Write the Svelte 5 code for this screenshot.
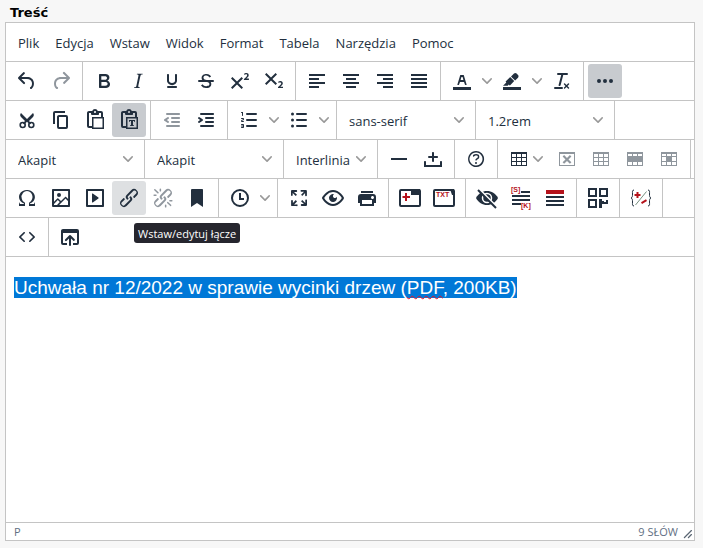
<script>
  const menus = ['Plik', 'Edycja', 'Wstaw', 'Widok', 'Format', 'Tabela', 'Narzędzia', 'Pomoc'];

  const chain = 'M6.2 12.3a1 1 0 011.4 1.4l-2.1 2a2 2 0 102.7 2.8l4.8-4.8a1 1 0 000-1.4 1 1 0 111.4-1.3 2.9 2.9 0 010 4L9.6 20a3.9 3.9 0 01-5.5-5.5l2-2zm11.6-.6a1 1 0 01-1.4-1.4l2-2a2 2 0 10-2.6-2.8L11 10.3a1 1 0 000 1.4A1 1 0 119.6 13a2.9 2.9 0 010-4L14.4 4a3.9 3.9 0 015.5 5.5l-2 2z';
  const board = 'M18 9V5h-2v1c0 .6-.4 1-1 1H9a1 1 0 01-1-1V5H6v13h3V9h9zM9 20H6a2 2 0 01-2-2V5c0-1.1.9-2 2-2h3.2A3 3 0 0112 1a3 3 0 012.8 2H18a2 2 0 012 2v4h1v12H9v-1zm1.5-9.5v9h9v-9h-9zM12 3a1 1 0 00-1 1c0 .5.4 1 1 1s1-.5 1-1-.4-1-1-1z';
  const indentLines = 'M7 5h12c.6 0 1 .4 1 1s-.4 1-1 1H7a1 1 0 110-2zm5 4h7c.6 0 1 .4 1 1s-.4 1-1 1h-7a1 1 0 010-2zm0 4h7c.6 0 1 .4 1 1s-.4 1-1 1h-7a1 1 0 010-2zm-5 4h12a1 1 0 010 2H7a1 1 0 010-2z';
  const listLines = 'M10 17h9a1 1 0 010 2h-9a1 1 0 010-2zm0-6h9a1 1 0 010 2h-9a1 1 0 010-2zm0-6h9a1 1 0 010 2h-9a1 1 0 010-2z';

  const paths = {
    undo: 'M6.4 8H12c3.7 0 6.2 2 6.8 5.1.6 2.7-.4 5.6-2.3 6.8a1 1 0 01-1-1.8c1.1-.6 1.8-2.7 1.4-4.6-.5-2.1-2.1-3.5-4.9-3.5H6.4l3.3 3.3a1 1 0 11-1.4 1.4l-5-5a1 1 0 010-1.4l5-5a1 1 0 011.4 1.4L6.4 8z',
    redo: 'M17.6 10H12c-2.8 0-4.4 1.4-4.9 3.5-.4 2 .3 4 1.4 4.6a1 1 0 11-1 1.8c-2-1.2-2.9-4.1-2.3-6.8.6-3 3-5.1 6.8-5.1h5.6l-3.3-3.3a1 1 0 111.4-1.4l5 5a1 1 0 010 1.4l-5 5a1 1 0 01-1.4-1.4l3.3-3.3z',
    bold: 'M7.8 19c-.3 0-.5 0-.6-.2l-.2-.5V5.7c0-.2 0-.4.2-.5l.6-.2h5c1.5 0 2.7.3 3.5 1 .7.6 1.1 1.4 1.1 2.5a3 3 0 01-.6 1.9c-.4.6-1 1-1.6 1.2.4.1.9.3 1.3.6s.8.7 1 1.2c.4.4.5 1 .5 1.6 0 1.3-.4 2.3-1.3 3-.8.7-2.1 1-3.8 1H7.8zm5-8.3c.6 0 1.2-.1 1.6-.5.4-.3.6-.7.6-1.3 0-1.1-.8-1.7-2.3-1.7H9.3v3.5h3.4zm.5 6c.7 0 1.3-.1 1.7-.4.4-.4.6-.9.6-1.5s-.2-1-.7-1.4c-.4-.3-1-.4-2-.4H9.4v3.8h4z',
    italic: 'M16.7 4.7l-.1.9h-.3c-.6 0-1 0-1.4.3-.3.3-.4.6-.5 1.1l-2.1 9.8v.6c0 .5.4.8 1.4.8h.2l-.2.8H8l.2-.8h.2c1.1 0 1.8-.5 2-1.5l2-9.8.1-.5c0-.6-.4-.8-1.4-.8h-.3l.2-.9h5.8z',
    underline: 'M16 5c.6 0 1 .4 1 1v5.5a4 4 0 01-.4 1.8l-1 1.4a5.3 5.3 0 01-5.5 1 5 5 0 01-1.6-1c-.5-.4-.8-.9-1.1-1.4a4 4 0 01-.4-1.8V6c0-.6.4-1 1-1s1 .4 1 1v5.5c0 .3 0 .6.2 1l.6.7a3.3 3.3 0 002.2.8 3.4 3.4 0 002.2-.8c.3-.2.4-.5.6-.8l.2-.9V6c0-.6.4-1 1-1zM8 17h8c.6 0 1 .4 1 1s-.4 1-1 1H8a1 1 0 010-2z',
    superscript: 'M15 9.4L10.4 14l4.6 4.6-1.4 1.4L9 15.4 4.4 20 3 18.6 7.6 14 3 9.4 4.4 8 9 12.6 13.6 8 15 9.4zm5.9 1.6h-5v-1l1-.8 1.7-1.6c.3-.5.5-.9.5-1.3 0-.3 0-.5-.2-.7-.2-.2-.5-.3-.9-.3l-.8.2-.7.4-.4-1.2c.2-.2.5-.4 1-.5.3-.2.8-.2 1.2-.2.8 0 1.4.2 1.8.6.4.4.6 1 .6 1.6 0 .5-.2 1-.5 1.5l-1.3 1.4-.6.5h2.6V11z',
    subscript: 'M10.4 10l4.6 4.6-1.4 1.4L9 11.4 4.4 16 3 14.6 7.6 10 3 5.4 4.4 4 9 8.6 13.6 4 15 5.4 10.4 10zM21 19h-5v-1l1-.8 1.7-1.6c.3-.4.5-.8.5-1.2 0-.3 0-.6-.2-.7-.2-.2-.5-.3-.9-.3a2 2 0 00-.8.2l-.7.3-.4-1.1 1-.6 1.2-.2c.8 0 1.4.3 1.8.7.4.4.6.9.6 1.5s-.2 1.1-.5 1.6a8 8 0 01-1.3 1.3l-.6.6h2.6V19z',
    alignLeft: 'M4 5h16v2H4zM4 9h10v2H4zM4 13h16v2H4zM4 17h10v2H4z',
    alignCenter: 'M4 5h16v2H4zM7 9h10v2H7zM4 13h16v2H4zM7 17h10v2H7z',
    alignRight: 'M4 5h16v2H4zM10 9h10v2H10zM4 13h16v2H4zM10 17h10v2H10z',
    justify: 'M4 5h16v2H4zM4 9h16v2H4zM4 13h16v2H4zM4 17h16v2H4z',
    textColor: 'M3 18h18v3H3zM8.7 16h-.8a.5.5 0 01-.5-.6l2.7-9c.1-.3.3-.4.5-.4h2.8c.2 0 .4.1.5.4l2.7 9a.5.5 0 01-.5.6h-.8a.5.5 0 01-.4-.4l-.7-2.2c0-.3-.3-.4-.5-.4h-3.4c-.2 0-.4.1-.5.4l-.7 2.2c0 .3-.2.4-.4.4zm2.6-7.6l-.6 2a.5.5 0 00.5.6h1.6a.5.5 0 00.5-.6l-.6-2c0-.3-.3-.4-.5-.4h-.4c-.2 0-.4.1-.5.4z',
    highlight: 'M3 18h18v3H3zM7.7 16.7H3l3.3-3.3-.7-.8L10.2 8l4 4.1-4 4.2c-.2.2-.6.2-.8 0l-.6-.7-1.1 1.1zm5-7.5L11 7.4l3-2.9a2 2 0 012.6 0L18 6c.7.7.7 2 0 2.7l-2.9 2.9-1.8-1.8-.5-.6',
    clear: 'M13.2 6a1 1 0 010 .2l-2.6 10a1 1 0 01-1 .8h-.2a.8.8 0 01-.8-1l2.6-10H8a1 1 0 110-2h9a1 1 0 010 2h-3.8zM5 18h7a1 1 0 010 2H5a1 1 0 010-2zm13 1.5L16.5 18 15 19.5a.7.7 0 01-1-1l1.5-1.5-1.5-1.5a.7.7 0 011-1l1.5 1.5 1.5-1.5a.7.7 0 011 1L17.5 17l1.5 1.5a.7.7 0 01-1 1z',
    more: 'M6 10a2 2 0 100 4 2 2 0 000-4zm12 0a2 2 0 100 4 2 2 0 000-4zm-6 0a2 2 0 100 4 2 2 0 000-4z',
    copy: 'M16 3H6a2 2 0 00-2 2v11h2V5h10V3zm1 4a2 2 0 012 2v10a2 2 0 01-2 2h-7a2 2 0 01-2-2V9c0-1.2.9-2 2-2h7zm0 12V9h-7v10h7z',
    paste: board,
    pasteText: board + 'M12 12h6v2h-.5l-.5-1h-1v4h.8v1h-3.6v-1h.8v-4h-1l-.5 1H12v-2z',
    outdent: indentLines + 'm1.6-3.8a1 1 0 01-1.2 1.6l-3-2a1 1 0 010-1.6l3-2a1 1 0 011.2 1.6L6.8 12l1.8 1.2z',
    indent: indentLines + 'm-2.6-3.8L6.2 12l-1.8-1.2a1 1 0 011.2-1.6l3 2a1 1 0 010 1.6l-3 2a1 1 0 11-1.2-1.6z',
    numbers: listLines + 'M6 4v3.5c0 .3-.2.5-.5.5a.5.5 0 01-.5-.5V5h-.5a.5.5 0 010-1H6zm-1 8.8l.2.2h1.3c.3 0 .5.2.5.5s-.2.5-.5.5H4.9a1 1 0 01-.9-1V13c0-.4.3-.8.6-1l1.2-.4.2-.3a.2.2 0 00-.2-.2H4.5a.5.5 0 01-.5-.5c0-.3.2-.5.5-.5h1.6c.5 0 .9.4.9 1v.1c0 .4-.3.8-.6 1l-1.2.4-.2.3zM7 17v2c0 .6-.4 1-1 1H4.5a.5.5 0 010-1h1.2c.2 0 .3-.1.3-.3 0-.2-.1-.3-.3-.3H4.4a.4.4 0 110-.8h1.3c.2 0 .3-.1.3-.3 0-.2-.1-.3-.3-.3H4.5a.5.5 0 110-1H6c.6 0 1 .4 1 1z',
    bullets: listLines + 'M5.5 4.500a1.500 1.500 0 100 3 1.500 1.500 0 000-3zm0 6a1.500 1.500 0 100 3 1.500 1.500 0 000-3zm0 6a1.500 1.500 0 100 3 1.500 1.500 0 000-3z',
    rule: 'M4 11h16v2H4z',
    space: 'M11 11H8a1 1 0 110-2h3V6c0-.6.4-1 1-1s1 .4 1 1v3h3c.6 0 1 .4 1 1s-.4 1-1 1h-3v3c0 .6-.4 1-1 1a1 1 0 01-1-1v-3zm10 4v5H3v-5c0-.6.4-1 1-1s1 .4 1 1v3h14v-3c0-.6.4-1 1-1s1 .4 1 1z',
    help: 'M12 5.500a6.500 6.500 0 00-6 9 6.300 6.300 0 001.400 2l1 1a6.300 6.300 0 003.600 1 6.500 6.500 0 006-9 6.300 6.300 0 00-1.400-2l-1-1a6.300 6.300 0 00-3.600-1zM12 4a7.800 7.800 0 015.700 2.300A8 8 0 1112 4zM9.600 9.700a.7.7 0 01-.7-.8c0-1.100 1.500-1.800 3.200-1.800 1.800 0 3.200.8 3.200 2.400 0 1.400-.4 2.100-1.500 2.800-.2 0-.3.1-.3.2a2 2 0 00-.8.8.8.8 0 01-1.400-.6c.3-.7.8-1 1.300-1.500l.4-.2c.7-.4.8-.6.8-1.500 0-.5-.6-.9-1.700-.9-.5 0-1 .1-1.400.3-.2 0-.3.1-.3.2 0 .2-.4.6-.8.6zM12 15a1 1 0 100 2 1 1 0 000-2z',
    table: 'M4 5h16v14H4zM5 7v3h4V7zm5 0v3h4V7zm5 0v3h4V7zM5 11v3h4v-3zm5 0v3h4v-3zm5 0v3h4v-3zM5 15v3h4v-3zm5 0v3h4v-3zm5 0v3h4v-3z',
    tableDelete: 'M4 5h16v14H4zM5 7v11h14V7zM9.100 8L12 10.900 14.900 8l1.500 1.500-2.900 2.900 2.900 2.900-1.500 1.500L12 13.900l-2.900 2.900-1.500-1.500 2.900-2.900-2.900-2.900z',
    tableRow: 'M4 5h16v14H4zM5 7v2h4V7zm5 0v2h4V7zm5 0v2h4V7zM5 15v3h4v-3zm5 0v3h4v-3zm5 0v3h4v-3z',
    tableCell: 'M4 5h16v14H4zM5 7v2h4V7zm5 0v2h4V7zm5 0v2h4V7zM5 10v4h4v-4zm10 0v4h4v-4zM5 15v3h4v-3zm5 0v3h4v-3zm5 0v3h4v-3z',
    omega: 'M15 18h4l1-2v4h-6v-3.3l1.4-1a6 6 0 001.8-2.9 6.3 6.3 0 00-.1-4.1 5.8 5.8 0 00-3-3.2c-.6-.3-1.3-.5-2.1-.5a5.1 5.1 0 00-3.9 1.8 6.3 6.3 0 00-1.3 6 6.2 6.2 0 001.8 3l1.4.9V20H4v-4l1 2h4v-.5l-2-1L5.4 15A6.5 6.5 0 014 11c0-1 .2-1.9.6-2.7A7 7 0 017.8 5C9.1 4.3 10.5 4 12 4a8.8 8.8 0 013.7.7c1.1.5 2 1.3 2.8 2.2a6.4 6.4 0 011.4 4.1c0 1.4-.5 2.8-1.3 4l-1.7 1.5-2 1v.5z',
    image: 'M5 15.7l3.3-3.2c.3-.3.7-.3 1 0L12 15l4.1-4c.3-.4.8-.4 1 0l2 1.9V5H5v10.7zM5 18V19h3l2.8-2.9-2-2L5 17.9zm14-3l-2.5-2.4-6.4 6.5H19v-4zM4 3h16c.6 0 1 .4 1 1v16c0 .6-.4 1-1 1H4a1 1 0 01-1-1V4c0-.6.4-1 1-1zm6 8a2 2 0 100-4 2 2 0 000 4z',
    media: 'M4 3h16c.6 0 1 .4 1 1v16c0 .6-.4 1-1 1H4a1 1 0 01-1-1V4c0-.6.4-1 1-1zm1 2v14h14V5H5zm4.8 2.6l5.6 4a.5.5 0 010 .8l-5.6 4A.5.5 0 019 16V8a.5.5 0 01.8-.4z',
    link: chain,
    unlink: chain + 'M7.6 6.3a.8.8 0 01-1 1.1L3.3 4.2a.7.7 0 111-1l3.2 3.1zM5.1 8.6a.8.8 0 010 1.5H3a.8.8 0 010-1.5H5zm5-3.5a.8.8 0 01-1.5 0V3a.8.8 0 011.5 0V5zm6 11.8a.8.8 0 011-1l3.2 3.2a.8.8 0 01-1 1L16 17zm-2.2 2a.8.8 0 011.5 0V21a.8.8 0 01-1.5 0V19zm5-3.5a.7.7 0 110-1.5H21a.8.8 0 010 1.5H19z',
    bookmark: 'M6 4v17l6-4 6 4V4c0-.6-.4-1-1-1H7a1 1 0 00-1 1z',
    clock: 'M12 3a9 9 0 100 18 9 9 0 000-18zm0 2a7 7 0 110 14 7 7 0 010-14zM11 7h2v5h3v2h-5z',
    fullscreen: 'M15.3 10l-1.2-1.3 2.9-3h-2.3a.9.9 0 110-1.7H19c.5 0 .9.4.9.9v4.4a.9.9 0 11-1.8 0V7l-2.9 3zm0 4l3 3v-2.3a.9.9 0 111.7 0V19c0 .5-.4.9-.9.9h-4.4a.9.9 0 110-1.8H17l-3-2.9 1.3-1.2zM10 15.4l-2.9 3h2.3a.9.9 0 110 1.7H5a.9.9 0 01-.9-.9v-4.4a.9.9 0 111.8 0V17l2.9-3 1.2 1.4zM8.7 10L5.7 7v2.3a.9.9 0 01-1.7 0V5c0-.5.4-.9.9-.9h4.4a.9.9 0 010 1.8H7l3 2.9-1.3 1.2z',
    preview: 'M3.5 12.5c.5.8 1.1 1.6 1.8 2.3 2 2 4.2 3.2 6.7 3.2s4.7-1.2 6.7-3.2a16.2 16.2 0 002.1-2.8 15.7 15.7 0 00-2.1-2.8c-2-2-4.2-3.2-6.7-3.2a9.3 9.3 0 00-6.7 3.2A16.2 16.2 0 003.2 12c0 .2.2.3.3.5zm-2.4-1l.7-1.2L4 7.8C6.2 5.4 8.9 4 12 4c3 0 5.8 1.4 8.1 3.8a18.2 18.2 0 012.8 3.7v1l-.7 1.2a18.2 18.2 0 01-2.2 2.5c-2.2 2.4-5 3.8-8 3.8s-5.8-1.4-8.1-3.8a18.2 18.2 0 01-2.8-3.7 1 1 0 010-1zm12-3.3a2 2 0 102.7 2.6 4 4 0 11-2.6-2.6z',
    print: 'M18 8H6a3 3 0 00-3 3v6h2v3h14v-3h2v-6a3 3 0 00-3-3zm-1 10H7v-4h10v4zm.5-5c-.8 0-1.5-.7-1.5-1.5s.7-1.5 1.5-1.5 1.5.7 1.5 1.5-.7 1.5-1.5 1.5zm.5-8H6v2h12V5z',
    qr: 'M2 2h9v9H2zM4 4v5h5V4zM13 2h9v9h-9zM15 4v5h5V4zM2 13h9v9H2zM4 15v5h5v-5zM13 13h3v2h2v1h2v-2h2v4h-6v4h-3z',
    code: 'M9.8 15.7c.3.3.3.8 0 1-.3.4-.9.4-1.2 0l-4.4-4.1a.8.8 0 010-1.2l4.4-4.2c.3-.3.9-.3 1.2 0 .3.3.3.8 0 1.1L6 12l3.8 3.7zM14.2 15.7c-.3.3-.3.8 0 1 .4.4.9.4 1.2 0l4.4-4.1c.3-.3.3-.8 0-1.2l-4.4-4.2a.8.8 0 00-1.2 0c-.3.3-.3.8 0 1.1L18 12l-3.8 3.7z',
    upload: 'M19 4a2 2 0 012 2v12a2 2 0 01-2 2h-4v-2h4V8H5v10h4v2H5a2 2 0 01-2-2V6c0-1.1.9-2 2-2h14zm-8 9.4l-2.3 2.3a1 1 0 11-1.4-1.4l4-4a1 1 0 011.4 0l4 4a1 1 0 01-1.4 1.4L13 13.4V20a1 1 0 01-2 0v-6.6z'
  };

  const b = (icon, label, state = '') => ({ kind: 'button', icon, label, state });
  const split = (icon, label) => ({ kind: 'split', icon, label });
  const pick = (value, label, size = 'wide') => ({ kind: 'select', value, label, size });

  const rows = [
    [
      [b('undo', 'Cofnij'), b('redo', 'Ponów', 'off')],
      [b('bold', 'Pogrubienie'), b('italic', 'Kursywa'), b('underline', 'Podkreślenie'), b('strike', 'Przekreślenie'), b('superscript', 'Indeks górny'), b('subscript', 'Indeks dolny')],
      [b('alignLeft', 'Wyrównaj do lewej'), b('alignCenter', 'Wyśrodkuj'), b('alignRight', 'Wyrównaj do prawej'), b('justify', 'Wyjustuj')],
      [split('textColor', 'Kolor tekstu'), split('highlight', 'Kolor tła'), b('clear', 'Wyczyść formatowanie')],
      [b('more', 'Więcej', 'on')]
    ],
    [
      [b('cut', 'Wytnij'), b('copy', 'Kopiuj'), b('paste', 'Wklej'), b('pasteText', 'Wklej jako tekst', 'on')],
      [b('outdent', 'Zmniejsz wcięcie', 'off'), b('indent', 'Zwiększ wcięcie')],
      [split('numbers', 'Lista numerowana'), split('bullets', 'Lista wypunktowana')],
      [pick('sans-serif', 'Krój pisma')],
      [pick('1.2rem', 'Rozmiar pisma')],
      []
    ],
    [
      [pick('Akapit', 'Format bloku')],
      [pick('Akapit', 'Styl')],
      [pick('Interlinia', 'Interlinia', 'narrow')],
      [b('rule', 'Pozioma linia'), b('space', 'Twarda spacja')],
      [b('help', 'Pomoc')],
      [{ kind: 'menu', icon: 'table', label: 'Tabela' }, b('tableDelete', 'Usuń tabelę', 'off'), b('table', 'Właściwości tabeli', 'off'), b('tableRow', 'Właściwości wiersza', 'off'), b('tableCell', 'Właściwości komórki', 'off')],
      []
    ],
    [
      [b('omega', 'Znak specjalny'), b('image', 'Wstaw obraz'), b('media', 'Wstaw media'), { ...b('link', 'Wstaw/edytuj łącze', 'hover'), tip: true }, b('unlink', 'Usuń łącze', 'off'), b('bookmark', 'Zakładka')],
      [split('clock', 'Wstaw datę i czas')],
      [b('fullscreen', 'Pełny ekran'), b('preview', 'Podgląd'), b('print', 'Drukuj')],
      [b('addFrame', 'Dodaj ramkę'), b('txtFrame', 'Ramka tekstowa')],
      [b('hidden', 'Niewidoczne znaki'), b('sections', 'Sekcje'), b('redLines', 'Wyróżnij wiersz')],
      [b('qr', 'Kod QR')],
      [b('variables', 'Zmienne')],
      []
    ],
    [[b('code', 'Kod źródłowy')], [b('upload', 'Wczytaj plik')]]
  ];
</script>

{#snippet glyph(name)}
  <svg class="icon" viewBox="0 0 24 24" width="24" height="24" aria-hidden="true">
    {#if name === 'cut'}
      <g fill="none" stroke="currentColor" stroke-width="1.6">
        <circle cx="7.7" cy="17" r="2.5" />
        <circle cx="16.3" cy="17" r="2.5" />
      </g>
      <path d="M6 5l6 6 6-6c1.100 1.300 1.100 2.900 0 4l-4 4 2.200 2.200-1.400 1.400L12 13.800l-2.800 2.800-1.400-1.400L10 13 6 9c-1.100-1.100-1.100-2.700 0-4z" />
    {:else if name === 'strike'}
      <path d="M15.600 8.500c-.5-.7-1-1.100-1.300-1.300-.6-.4-1.300-.6-2-.6-2.700 0-2.800 1.700-2.800 2.100 0 1.600 1.800 2 3.200 2.300 4.400.9 4.600 2.800 4.600 3.900 0 1.400-.7 4.100-5 4.100A6.200 6.200 0 017 16.400l1.500-1.100c.4.6 1.600 2 3.700 2 1.600 0 2.500-.4 3-1.200.4-.8.3-2-.8-2.600-.7-.4-1.600-.7-2.900-1-1-.2-3.900-.8-3.900-3.600C7.600 6 10.300 5 12.400 5c2.900 0 4.200 1.600 4.700 2.400l-1.500 1.100z" />
      <path d="M5 11h14a1 1 0 010 2H5a1 1 0 010-2z" />
    {:else if name === 'addFrame' || name === 'txtFrame'}
      <rect x="2" y="4" width="20" height="16" rx="1" fill="#fff" stroke="currentColor" stroke-width="2" />
      {#if name === 'addFrame'}
        <path d="M13 3h9v6h-9z" />
        <path class="red" d="M7 7h2v3h3v2H9v3H7v-3H4.500v-2H7z" />
      {:else}
        <path d="M18 3h4v6h-2z" />
        <text class="red tiny" x="4" y="11">TXT</text>
      {/if}
    {:else if name === 'hidden'}
      <path d="M1 12c2.500-4.800 6.500-7 11-7s8.500 2.200 11 7c-2.500 4.800-6.500 7-11 7s-8.500-2.200-11-7z" />
      <circle cx="12" cy="12" r="4.500" fill="none" stroke="#fff" stroke-width="1.500" />
      <path d="M2.500 1.500l19 19" stroke="#fff" stroke-width="2" />
      <path d="M3 4l18 18" stroke="currentColor" stroke-width="2" />
    {:else if name === 'sections'}
      <path d="M12 5h9v2h-9zM3 9h18v2H3zM3 13h18v2H3zM3 17h9v2H3z" />
      <text class="red tiny" x="2" y="6">[S]</text>
      <text class="red tiny" x="12" y="22">[K]</text>
    {:else if name === 'redLines'}
      <path class="red" d="M3 4h18v4H3z" />
      <path d="M3 10h18v2H3zM3 14h18v2H3zM3 18h18v2H3z" />
    {:else if name === 'variables'}
      <g fill="none" stroke="currentColor" stroke-width="1">
        <path d="M5 4C3 4 3.500 6 3.500 8S3.500 11.500 2 12c1.500.5 1.500 2 1.500 4S3 20 5 20M19 4c2 0 1.500 2 1.500 4s0 3.500 1.500 4c-1.500.5-1.500 2-1.500 4s.5 4-1.500 4" />
        <path d="M6.500 19L17.500 5.500" stroke="#789080" />
      </g>
      <path class="red" d="M7.500 6h2v2h2v2h-2v2h-2v-2h-2V8h2zM12 16.200l5-3 1 1.800-5 3z" />
    {:else}
      <path fill-rule="evenodd" d={paths[name]} />
    {/if}
  </svg>
{/snippet}

{#snippet chevron()}
  <svg class="chevron" viewBox="0 0 10 10" width="10" height="10" aria-hidden="true">
    <path d="M8.700 2.200c.3-.3.800-.3 1 0 .4.4.4.9 0 1.200L5.700 7.800c-.3.3-.9.3-1.200 0L.2 3.400a.8.8 0 010-1.200c.3-.3.8-.3 1.100 0L5 6l3.700-3.800z" />
  </svg>
{/snippet}

<main class="field">
  <div class="label" id="content-label">Treść</div>
  <div class="editor">
    <nav class="menubar" aria-label="Menu">
      {#each menus as item}
        <button type="button">{item}</button>
      {/each}
    </nav>

    {#each rows as row}
      <div class="toolbar" role="toolbar">
        {#each row as group}
          <div class="group">
            {#each group as item}
              {#if item.kind === 'button'}
                <div class="slot">
                  <button type="button" class="tool {item.state}" aria-label={item.label} disabled={item.state === 'off'}>
                    {@render glyph(item.icon)}
                  </button>
                  {#if item.tip}
                    <div class="tooltip" role="tooltip">{item.label}</div>
                  {/if}
                </div>
              {:else if item.kind === 'split'}
                <button type="button" class="tool" aria-label={item.label}>{@render glyph(item.icon)}</button>
                <button type="button" class="arrow" aria-label="{item.label}: opcje">{@render chevron()}</button>
              {:else if item.kind === 'menu'}
                <button type="button" class="tool with-menu" aria-label={item.label}>
                  {@render glyph(item.icon)}{@render chevron()}
                </button>
              {:else}
                <div class="pick {item.size}">
                  <select aria-label={item.label}>
                    <option>{item.value}</option>
                  </select>
                  {@render chevron()}
                </div>
              {/if}
            {/each}
          </div>
        {/each}
      </div>
    {/each}

    <div class="content" contenteditable="true" role="textbox" tabindex="0" spellcheck="false" aria-labelledby="content-label">
      <p><span class="selected">Uchwała nr 12/2022 w sprawie wycinki drzew (<span class="misspelt">PDF</span>, 200KB)</span></p>
    </div>

    <footer class="status">
      <span>P</span>
      <span class="count">9 SŁÓW</span>
      <svg class="grip" viewBox="0 0 10 10" width="10" height="10" aria-hidden="true">
        <path d="M8.100 1.100A.5.5 0 118.900 2l-7 7A.5.5 0 111 8l7-7zM8.100 5.100A.5.5 0 118.900 6l-3 3A.5.5 0 115 8l3-3z" />
      </svg>
    </footer>
  </div>
</main>

<style>
  :global(body) {
    margin: 0;
    background: #f7f7f7;
  }

  .field {
    padding: 4px 8px 7px 5px;
    color: #222f3e;
    font: 13px/20px 'Open Sans', 'Noto Sans', sans-serif;
  }

  .label {
    padding-left: 5px;
    color: #000;
    font: bold 13px/18px 'DejaVu Sans', sans-serif;
  }

  .editor {
    border: 1px solid #c4c4c4;
    background: #fff;
  }

  button,
  select {
    margin: 0;
    border: 0;
    background: none;
    color: inherit;
    font: inherit;
  }

  .menubar {
    display: flex;
    padding: 2px 4px;
  }

  .menubar button {
    height: 34px;
    padding: 2px 8px 0;
  }

  .toolbar {
    display: flex;
    min-height: 38px;
    border-top: 1px solid #c4c4c4;
  }

  .group {
    display: flex;
    align-items: flex-start;
    padding: 2px 4px;
    border-right: 1px solid #c4c4c4;
  }

  .group:last-child {
    border-right: 0;
  }

  .slot {
    position: relative;
  }

  .tool,
  .arrow {
    display: flex;
    align-items: center;
    justify-content: center;
    width: 34px;
    height: 34px;
    padding: 0;
    border-radius: 3px;
  }

  .arrow {
    width: 16px;
  }

  .with-menu {
    justify-content: flex-start;
    gap: 2px;
    width: 48px;
    padding-left: 5px;
  }

  .on {
    background: #c8cbcf;
  }

  .hover {
    background: #dee0e2;
  }

  .off .icon {
    opacity: 0.5;
  }

  .icon {
    display: block;
    flex: none;
    fill: currentColor;
  }

  .chevron {
    display: block;
    flex: none;
    fill: #999;
  }

  .red {
    fill: #b5121b;
  }

  .tiny {
    font: bold 7px 'Liberation Sans', sans-serif;
  }

  .pick {
    display: grid;
    align-items: center;
    height: 34px;
  }

  .wide {
    width: 130px;
  }

  .narrow {
    width: 85px;
  }

  .pick select,
  .pick .chevron {
    grid-area: 1 / 1;
  }

  .pick select {
    appearance: none;
    width: 100%;
    height: 34px;
    padding: 2px 8px 0;
  }

  .pick .chevron {
    justify-self: end;
    margin-right: 7px;
    pointer-events: none;
  }

  .tooltip {
    position: absolute;
    top: 42px;
    left: 22px;
    z-index: 1;
    padding: 2px 4px 0;
    border-radius: 3px;
    background: #26262e;
    color: #fff;
    font-size: 11px;
    line-height: 18px;
    white-space: nowrap;
  }

  .content {
    min-height: 245px;
    padding: 20px 8px 0;
    border-top: 1px solid #c4c4c4;
    outline: 0;
    font: 19px/22px 'Liberation Sans', sans-serif;
  }

  .content p {
    margin: 0;
  }

  .selected {
    background: #0078d7;
    color: #fff;
  }

  .misspelt {
    text-decoration: underline wavy #e81123 1px;
    text-decoration-skip-ink: none;
  }

  .status {
    display: flex;
    align-items: center;
    height: 17px;
    padding-left: 8px;
    border-top: 1px solid #c4c4c4;
    color: #5f6f83;
    font-size: 11px;
    line-height: 18px;
  }

  .count {
    margin-left: auto;
  }

  .grip {
    align-self: flex-end;
    margin: 0 1px 1px 5px;
    fill: #5a6673;
  }
</style>
